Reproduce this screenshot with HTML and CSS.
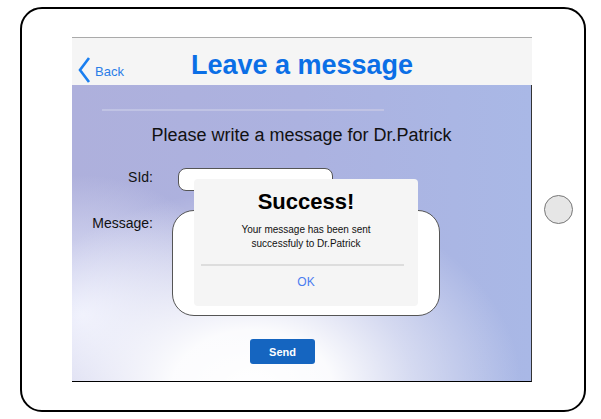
FILE: index.html
```html
<!DOCTYPE html>
<html>
<head>
<meta charset="utf-8">
<link rel="stylesheet" href="styles.css">
</head>
<body>
<div class="tablet">
  <div class="screen">
    <div class="header">
      <a class="back">
        <svg class="chev" width="14" height="28" viewBox="0 0 14 28"><path d="M12 2 L3 14 L12 26" fill="none" stroke="#1a7ff0" stroke-width="2.6" stroke-linejoin="miter"/></svg>
        <span class="back-text">Back</span>
      </a>
      <h1 class="title">Leave a message</h1>
    </div>
    <div class="content">
      <div class="divider"></div>
      <p class="prompt">Please write a message for Dr.Patrick</p>
      <div class="row row-sid">
        <label class="lbl lbl-sid">SId:</label>
        <div class="input"></div>
      </div>
      <div class="row row-msg">
        <label class="lbl lbl-msg">Message:</label>
        <div class="textarea"></div>
      </div>
      <button class="send">Send</button>
      <div class="dialog">
        <div class="d-title">Success!</div>
        <div class="d-body">Your message has been sent<br>successfuly to Dr.Patrick</div>
        <div class="d-sep"></div>
        <div class="d-ok">OK</div>
      </div>
    </div>
  </div>
  <div class="home"></div>
</div>
</body>
</html>
```
FILE: styles.css
```css
* { box-sizing: border-box; }
html, body { margin: 0; padding: 0; background: #fff; }
body { font-family: "Liberation Sans", Arial, sans-serif; width: 601px; height: 419px; overflow: hidden; }

.tablet {
  margin: 7px 0 0 20px;
  width: 566px;
  height: 405px;
  border: 2px solid #000;
  border-radius: 22px;
  display: flex;
  padding-left: 50px;
}

.screen {
  margin-top: 28px;
  width: 460px;
  align-self: flex-start;
  display: flex;
  flex-direction: column;
}

.header {
  border-top: 1px solid #aaa;
  height: 48px;
  background: #f5f5f5;
  display: flex;
  align-items: center;
  position: relative;
}
.back {
  display: flex;
  align-items: center;
  margin-left: 5px;
  margin-top: 16px;
  color: #2f80ed;
}
.chev { display: block; }
.back-text { font-size: 13px; margin-left: 4px; margin-top: 3px; color: #2a7de8; }
.title {
  margin: 0;
  font-size: 27px;
  font-weight: bold;
  color: #0b6fe6;
  position: absolute;
  left: 0; right: 0;
  top: 12px;
  text-align: center;
  line-height: 31px;
  pointer-events: none;
}

.content {
  position: relative;
  height: 297px;
  border-right: 1px solid #333;
  border-bottom: 1px solid #000;
  background:
    radial-gradient(ellipse 270px 200px at 180px 305px, rgba(255,255,255,1) 0%, rgba(255,255,255,0.95) 30%, rgba(255,255,255,0.5) 60%, rgba(255,255,255,0) 100%),
    radial-gradient(ellipse 160px 140px at 10px 230px, rgba(240,242,255,0.9) 0%, rgba(240,242,255,0) 100%),
    linear-gradient(to right, #aeb0dc 0%, #acb2e0 50%, #a9b8e6 100%);
  display: flex;
  flex-direction: column;
}

.divider {
  margin: 24px 0 0 30px;
  width: 282px;
  height: 2px;
  background: #c0c3e4;
}
.prompt {
  margin: 14px 0 0 0;
  font-size: 18px;
  line-height: 21px;
  text-align: center;
  color: #111;
}

.row { display: flex; align-items: flex-start; }
.row-sid { margin-top: 22px; }
.row-msg { margin-top: 19px; }
.lbl {
  width: 81px;
  text-align: right;
  font-size: 14px;
  line-height: 16px;
  color: #111;
}
.lbl-sid { padding-top: 1px; }
.lbl-msg { padding-top: 5px; }
.input {
  margin-left: 25px;
  width: 155px;
  height: 23px;
  background: #fff;
  border: 1px solid #555;
  border-radius: 8px;
}
.textarea {
  margin-left: 19px;
  width: 268px;
  height: 106px;
  background: #fff;
  border: 1px solid #555;
  border-radius: 22px;
}

.send {
  margin: 23px 0 0 178px;
  width: 65px;
  height: 25px;
  background: #1565c0;
  color: #fff;
  border: none;
  border-radius: 3px;
  font-family: "Liberation Sans", Arial, sans-serif;
  font-weight: bold;
  font-size: 11px;
  padding: 0;
}

.dialog {
  position: absolute;
  left: 122px;
  top: 94px;
  width: 224px;
  height: 127px;
  background: #f5f5f5;
  border-radius: 4px;
  padding: 10px 7px 0 7px;
  text-align: center;
}
.d-title { font-size: 22px; font-weight: bold; line-height: 25px; color: #000; }
.d-body { margin-top: 9px; font-size: 10px; line-height: 14px; color: #111; }
.d-sep { margin: 13px 7px 0 0; height: 2px; background: #ddd; }
.d-ok { margin-top: 9px; font-size: 12px; line-height: 14px; color: #4a7cf0; }

.home {
  align-self: center;
  margin-left: 12px;
  width: 29px;
  height: 29px;
  border-radius: 50%;
  background: #e6e6e6;
  border: 1px solid #777;
}
```
